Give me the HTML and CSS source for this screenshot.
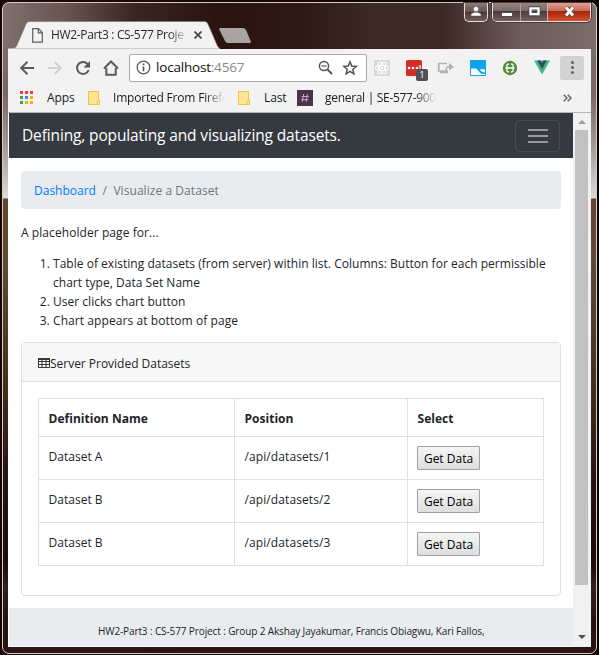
FILE: index.html
```html
<!DOCTYPE html>
<html lang="en">
<head>
<meta charset="utf-8">
<title>HW2-Part3 : CS-577 Project</title>
<link rel="stylesheet" href="styles.css">
</head>
<body>
<div class="window">
  <header class="titlebar">
    <div class="tab">
      <svg class="tab-shape" width="212" height="28" viewBox="0 0 212 28"><path d="M0 28V27H6Q8 27 9 24L18 3Q19 .5 21 .5H197Q199 .5 200 3L209 24Q210 27 212 27.5V28Z" fill="#f2f2f2" stroke="#82706d" stroke-width=".6"/></svg>
      <svg class="tab-page" width="11" height="15" viewBox="0 0 11 15" fill="none" stroke="#5c5e62" stroke-width="1.2"><path d="M.7.7H6.5L10.3 4.5V14.2H.7ZM6.3.9V4.8H10"/></svg>
      <span class="tab-title">HW2-Part3 : CS-577 Proje</span>
      <svg class="tab-close" width="8" height="8" viewBox="0 0 8 8" stroke="#45464a" stroke-width="1.7"><path d="M.5.5 7.5 7.5M7.5.5.5 7.5"/></svg>
    </div>
    <svg class="new-tab" width="33" height="15" viewBox="0 0 33 15"><path d="M1 0H24Q26 0 27 2L32 14Q32 15 31 15H9Q7 15 6 13L0 1Z" fill="#a9a4a2"/></svg>
    <div class="caption-user"><svg width="12" height="11" viewBox="0 0 12 11" fill="#fff" stroke="#555" stroke-width=".5"><circle cx="6" cy="3" r="2.6"/><path d="M1 10V8Q3 6.200 6 6.200T11 8V10Z"/></svg></div>
    <div class="caption-group">
      <div class="cap min"><svg width="12" height="11" viewBox="0 0 12 11"><rect x=".5" y="6.500" width="11" height="4" fill="#fff" stroke="#50515c"/></svg></div>
      <div class="cap max"><svg width="13" height="11" viewBox="0 0 13 11"><path d="M2.500 2H10.500V8.500H2.500Z" fill="none" stroke="#50515c" stroke-width="4"/><path d="M2.500 2.300H10.500V8.200H2.500Z" fill="none" stroke="#fff" stroke-width="2.300"/></svg></div>
      <div class="cap close"><svg width="13" height="11" viewBox="0 0 13 11"><path d="M3 1.500 10 9.500M10 1.500 3 9.500" stroke="#56474c" stroke-width="4.500"/><path d="M3 1.500 10 9.500M10 1.500 3 9.500" stroke="#fff" stroke-width="2.800"/></svg></div>
    </div>
  </header>
  <main class="browser">
    <div class="toolbar">
      <svg class="nav-icons" width="120" height="36" viewBox="8 49 120 36" fill="none" stroke="#5a5b5f" stroke-width="2">
        <path d="M34 67H21.500M27.500 60.700 21.200 67 27.500 73.300"/>
        <path d="M48 67H60.500M54.500 60.700 60.800 67 54.500 73.300" stroke="#d2d2d2"/>
        <path d="M88 63.500A6 6 0 1 0 88.700 69"/><path d="M90 60V66.500H83.500Z" fill="#5a5b5f" stroke="none"/>
        <path d="M104 67.500 111 60.500 118 67.500M106.300 67V73.800H115.700V67"/>
      </svg>
      <div class="address">
        <svg width="15" height="15" viewBox="0 0 15 15" fill="none" stroke="#5a5b5f" stroke-width="1.300"><circle cx="7.500" cy="7.500" r="6.300"/><path d="M7.500 3.500V5.200M7.500 6.400V11.300" stroke-width="1.700"/></svg>
        <span class="url">localhost<span class="port">:4567</span></span>
        <svg class="addr-actions" width="42" height="16" viewBox="0 0 42 16" fill="none" stroke="#555659" stroke-width="1.500"><circle cx="6" cy="6" r="4.600"/><path d="M3.500 6H8.500" stroke-width="1.200"/><path d="M9.500 9.500 14 14" stroke-width="2"/><path d="M32 1.800 33.700 6 38.200 6.400 34.800 9.400 35.900 13.800 32 11.400 28.100 13.800 29.200 9.400 25.800 6.400 30.300 6Z"/></svg>
      </div>
      <div class="extensions">
        <svg class="ext-icons" width="186" height="28" viewBox="374 54 186 28">
          <rect x="374" y="60" width="16" height="16" fill="#d8d8d8"/>
          <g fill="none" stroke="#fff" stroke-width="1.100"><ellipse cx="382" cy="68" rx="6.500" ry="2.600"/><ellipse cx="382" cy="68" rx="6.500" ry="2.600" transform="rotate(60 382 68)"/><ellipse cx="382" cy="68" rx="6.500" ry="2.600" transform="rotate(120 382 68)"/></g><circle cx="382" cy="68" r="1.300" fill="#fff"/>
          <g transform="translate(0 1)">
          <rect x="406" y="59" width="16" height="16" rx="1.500" fill="#d32d2a"/><g fill="#fff"><circle cx="409" cy="67" r="1.300"/><circle cx="413" cy="67" r="1.300"/><circle cx="417" cy="67" r="1.300"/><rect x="419.500" y="64" width="1.200" height="6"/></g>
          <path d="M447 62.500H438.700V70H448M443 70V72M440 71.500H448M446 69Q446 65.500 450 65.500" fill="none" stroke="#b0b0b0" stroke-width="1.600"/><path d="M449 62 454 66 449 69.500Z" fill="#b0b0b0"/>
          <rect x="470" y="59" width="16" height="16" rx="1" fill="#0ea5ef"/><path d="M471 67.500H475.500Q477.500 68 478.500 70T482 73 H485V74H471ZM480 68.300Q482.500 67.500 485 68.500V71.500Q481.500 71.500 480 68.300Z" fill="#fff"/>
          <circle cx="510" cy="67" r="7.200" fill="#558b3b"/><path d="M509 63Q506.500 63 507 65.500 507 67 505.500 67 507 67 507 68.500 506.500 71 509 71M511 63Q513.500 63 513 65.500 513 67 514.500 67 513 67 513 68.500 513.500 71 511 71M507 67H513" fill="none" stroke="#fff" stroke-width="1.300"/>
          <path d="M534 59.500H550L542 73.500Z" fill="#41b883"/><path d="M537.200 59.500H540.500L542 62.300 543.500 59.500H546.800L542 68Z" fill="#35495e"/>
          </g>
        </svg>
        <span class="badge">1</span>
        <div class="more"><i></i><i></i><i></i></div>
      </div>
    </div>
    <nav class="bookmarks">
      <svg class="apps" width="13" height="13" viewBox="0 0 13 13"><path d="M0 0H3V3H0ZM5 0H8V3H5ZM10 0H13V3H10Z" fill="#ea4335"/><path d="M0 5H3V8H0ZM0 10H3V13H0Z" fill="#34a05a"/><path d="M5 5H8V8H5Z" fill="#3f80ee"/><path d="M10 5H13V8H10ZM5 10H8V13H5ZM10 10H13V13H10Z" fill="#fbad05"/></svg>
      <span class="bm b1">Apps</span>
      <svg class="folder" width="12" height="14" viewBox="0 0 12 14"><path d="M.5.5H10.500V9H11.500V13.500H.5Z" fill="#ffe590" stroke="#e8c548"/><path d="M9 13V10H10.500" fill="none" stroke="#e8c548"/></svg>
      <span class="bm b2 fade">Imported From Firefo</span>
      <svg class="folder" width="12" height="14" viewBox="0 0 12 14"><path d="M.5.5H10.500V9H11.500V13.500H.5Z" fill="#ffe590" stroke="#e8c548"/><path d="M9 13V10H10.500" fill="none" stroke="#e8c548"/></svg>
      <span class="bm b3">Last</span>
      <svg class="hash" width="16" height="16" viewBox="0 0 16 16"><rect width="16" height="16" fill="#4b334d"/><path d="M6.700 4 5.300 12M10.400 4 9 12M4.500 6.500H11.700M4 9.600H11.200" fill="none" stroke="#baabbd"/></svg>
      <span class="bm b4 fade">general | SE-577-900</span>
      <svg class="chevrons" width="9" height="8" viewBox="0 0 9 8" fill="none" stroke="#606164" stroke-width="1.400"><path d="M.7.7 4 4 .7 7.300M4.700.7 8 4 4.700 7.300"/></svg>
    </nav>
    <div class="viewport">
      <div class="page">
        <div class="navbar"><span class="brand">Defining, populating and visualizing datasets.</span><div class="toggler"><i></i><i></i><i></i></div></div>
        <div class="content">
          <div class="breadcrumb"><a class="dash">Dashboard</a><span class="slash">/</span><span class="current">Visualize a Dataset</span></div>
          <p class="intro">A placeholder page for...</p>
          <ol class="steps">
            <li>Table of existing datasets (from server) within list. Columns: Button for each permissible<br>chart type, Data Set Name</li>
            <li>User clicks chart button</li>
            <li class="wide">Chart appears at bottom of page</li>
          </ol>
          <section class="card">
            <div class="card-header"><svg width="12" height="10" viewBox="0 0 12 10" fill="none" stroke="#212529"><path d="M.5 1H11.500V9.500H.5ZM.5 3.500H11.500M.5 6.500H11.500M4 1V9.500M8 1V9.500" stroke-width=".9"/><path d="M0 1H12" stroke-width="1.600"/></svg><span>Server Provided Datasets</span></div>
            <table>
              <colgroup><col class="c1"><col class="c2"><col class="c3"></colgroup>
              <tr><th>Definition Name</th><th>Position</th><th>Select</th></tr>
              <tr><td>Dataset A</td><td class="path">/api/datasets/1</td><td><button>Get Data</button></td></tr>
              <tr><td>Dataset B</td><td class="path">/api/datasets/2</td><td><button>Get Data</button></td></tr>
              <tr><td>Dataset B</td><td class="path">/api/datasets/3</td><td><button>Get Data</button></td></tr>
            </table>
          </section>
        </div>
        <footer><span>HW2-Part3 : CS-577 Project : Group 2 Akshay Jayakumar, Francis Obiagwu, Kari Fallos,</span></footer>
      </div>
      <div class="scrollbar"><i class="up"></i><div class="thumb"></div><i class="down"></i></div>
    </div>
  </main>
</div>
</body>
</html>
```
FILE: styles.css
```css
* { box-sizing: border-box; }
html, body { margin: 0; width: 599px; height: 655px; overflow: hidden; }
body { padding: 2px 2px 1px; background: linear-gradient(90deg, #110303, #200a05 2px, #100303 590px, #050101); font: 12px/19px "Open Sans", "Noto Sans", sans-serif; color: #212529; }
svg { display: block; flex: none; }
span { white-space: nowrap; }
.window {
  width: 595px; height: 652px; padding: 0 5px; border: 1px solid #d2cbc8; border-radius: 7px;
  background:
    linear-gradient(90deg, #7d706d, #67534f 65px, #3b2623 130px, #2a1310 215px, #2d1915 300px, #3b2824 365px, #3c2926 440px, #6c5b58 515px, #7c6d6a) 0 0 / 100% 46px no-repeat,
    linear-gradient(#7b6c69 46px, #796663 90px, #aaa09c 150px, #dedad6 195px, #60452f 196px, #604936 260px, #49311f 370px, #28120e 480px, #1c0b0a 560px, #35201c 585px, #28100e 620px, #2d1515);
}
.titlebar { display: flex; height: 46px; align-items: flex-start; }
.tab { position: relative; display: flex; flex: none; width: 212px; height: 28px; margin-top: 18px; padding: 7px 0 0 24px; }
.tab-shape { position: absolute; left: 0; top: 0; }
.tab-page, .tab-title, .tab-close { position: relative; }
.tab-title { width: 136px; margin: -3px 0 0 8px; letter-spacing: -.34px; color: #27282c; mask-image: linear-gradient(90deg, #000 118px, transparent 138px); }
.tab-close { margin: 3px 0 0 7px; }
.new-tab { margin: 25px 0 0 -1px; }
.caption-user, .caption-group { height: 19px; border: 1px solid #e3dddb; border-top: 0; border-radius: 0 0 5px 5px; box-shadow: 0 0 0 1px #4b3a38; }
.caption-user { width: 24px; margin-left: 212px; padding: 3px 5px; background: linear-gradient(#8b7b78, #65504d 50%, #4c3632 51%, #715d59); }
.caption-group { display: flex; width: 103px; margin-left: 4px; overflow: hidden; }
.cap { display: grid; place-items: center; padding-bottom: 1px; background: linear-gradient(#938582, #7a6864 46%, #4d3936 47%, #75615e); }
.min { width: 28px; border-right: 1px solid #aaa09d; }
.max { width: 27px; border-right: 1px solid #c9b6b1; }
.close { flex: 1; background: linear-gradient(#dfa093, #c56a57 46%, #a9230b 47%, #d05333); }
.browser { width: 583px; height: 598px; background: #f2f2f2; }
.toolbar { display: flex; height: 37px; align-items: center; }
.address { display: flex; align-items: center; width: 238px; height: 28px; margin: 0 0 0 1px; padding: 0 6px; border: 1px solid #acacac; border-radius: 2px; background: #fff; }
.url { width: 164px; margin-left: 5px; font-size: 13.5px; letter-spacing: -.2px; color: #101010; }
.port { color: #85868a; }
.addr-actions { margin-left: 8.5px; }
.extensions { position: relative; display: flex; align-items: center; margin-left: 7px; }
.badge { position: absolute; left: 42px; top: 15px; width: 12px; height: 12px; border-radius: 2px; background: #505154; color: #fff; font-size: 9.5px; line-height: 12px; text-align: center; }
.more { display: flex; flex-direction: column; align-items: center; justify-content: center; gap: 2px; width: 24px; height: 24px; border-radius: 2px; background: #d2d2d2; }
.more i { width: 3px; height: 3px; border-radius: 50%; background: #606164; }
.bookmarks { display: flex; align-items: center; height: 27px; padding: 0 0 3px 12px; border-bottom: 1px solid #b7b5ba; color: #1b1b1e; }
.b1 { width: 41px; margin-left: 14px; }
.b2 { width: 112px; margin: 0 13px; }
.b3 { width: 33px; margin-left: 14px; }
.b4 { width: 111px; margin-left: 12px; }
.bm { flex: none; letter-spacing: -.1px; }
.b2 { letter-spacing: -.2px; }
.b4 { letter-spacing: -.3px; }
.fade { mask-image: linear-gradient(90deg, #000 82%, transparent 100%); }
.chevrons { margin-left: 127px; }
.viewport { display: flex; height: 534px; padding-left: 1px; background: #fff; }
.page { width: 564px; letter-spacing: .025px; }
.navbar { display: flex; justify-content: space-between; align-items: center; height: 45px; padding: 0 13px; background: #343a40; color: #fff; font-size: 15.5px; }
.brand { letter-spacing: -.14px; }
.toggler { display: flex; flex-direction: column; align-items: center; justify-content: center; gap: 4px; width: 45px; height: 32px; border: 1px solid #484d53; border-radius: 4px; }
.toggler i { width: 20px; height: 2px; background: #96999c; }
.content { padding: 13px 12px 12px; }
.breadcrumb { display: flex; align-items: center; height: 38px; padding: 0 13px; border-radius: 4px; background: #e9ecef; color: #6c757d; }
.dash { color: #007bff; letter-spacing: 0; }
.slash { margin: 0 6.5px; }
.current { letter-spacing: .06px; }
.intro { margin: 14px 0 12px; letter-spacing: .07px; }
.steps { margin: 0; padding-left: 32px; }
.wide { letter-spacing: .08px; }
.card { height: 254px; margin-top: 12px; border: 1px solid #dfdfdf; border-radius: 4px; }
.card-header { display: flex; align-items: center; height: 39px; padding: 2px 16px 0; border-bottom: 1px solid #dfdfdf; background: #f7f7f7; letter-spacing: -.02px; }
table { width: 505px; margin: 16px 0 0 16px; table-layout: fixed; border-collapse: collapse; }
.c1 { width: 196px; } .c2 { width: 173px; } .c3 { width: 136px; }
td, th { padding: 10px 9.500px 0; border: 1px solid #dee2e6; text-align: left; vertical-align: top; }
.path { letter-spacing: .1px; }
tr { height: 43px; } tr:first-child { height: 38px; }
button { display: block; width: 63px; height: 24px; margin: -1px 0 0 -.5px; padding: 0; border: 1px solid #a0a0a0; border-radius: 1px; background: linear-gradient(#f5f5f5, #dedede); font: inherit; color: #000; white-space: nowrap; }
footer { height: 38px; background: #e9ecef; padding: 14px 0 0 89px; font-size: 10px; letter-spacing: -.115px; }
.scrollbar { display: flex; flex-direction: column; align-items: center; width: 18px; background: #f1f1f1; padding: 7px 2px 8px 1px; }
.up { border: 4px solid transparent; border-top: 0; border-bottom-color: #9d9d9d; }
.thumb { width: 13px; height: 455px; margin-top: 6px; background: #c1c1c1; }
.down { margin-top: auto; border: 4px solid transparent; border-bottom: 0; border-top-color: #505050; }
```
